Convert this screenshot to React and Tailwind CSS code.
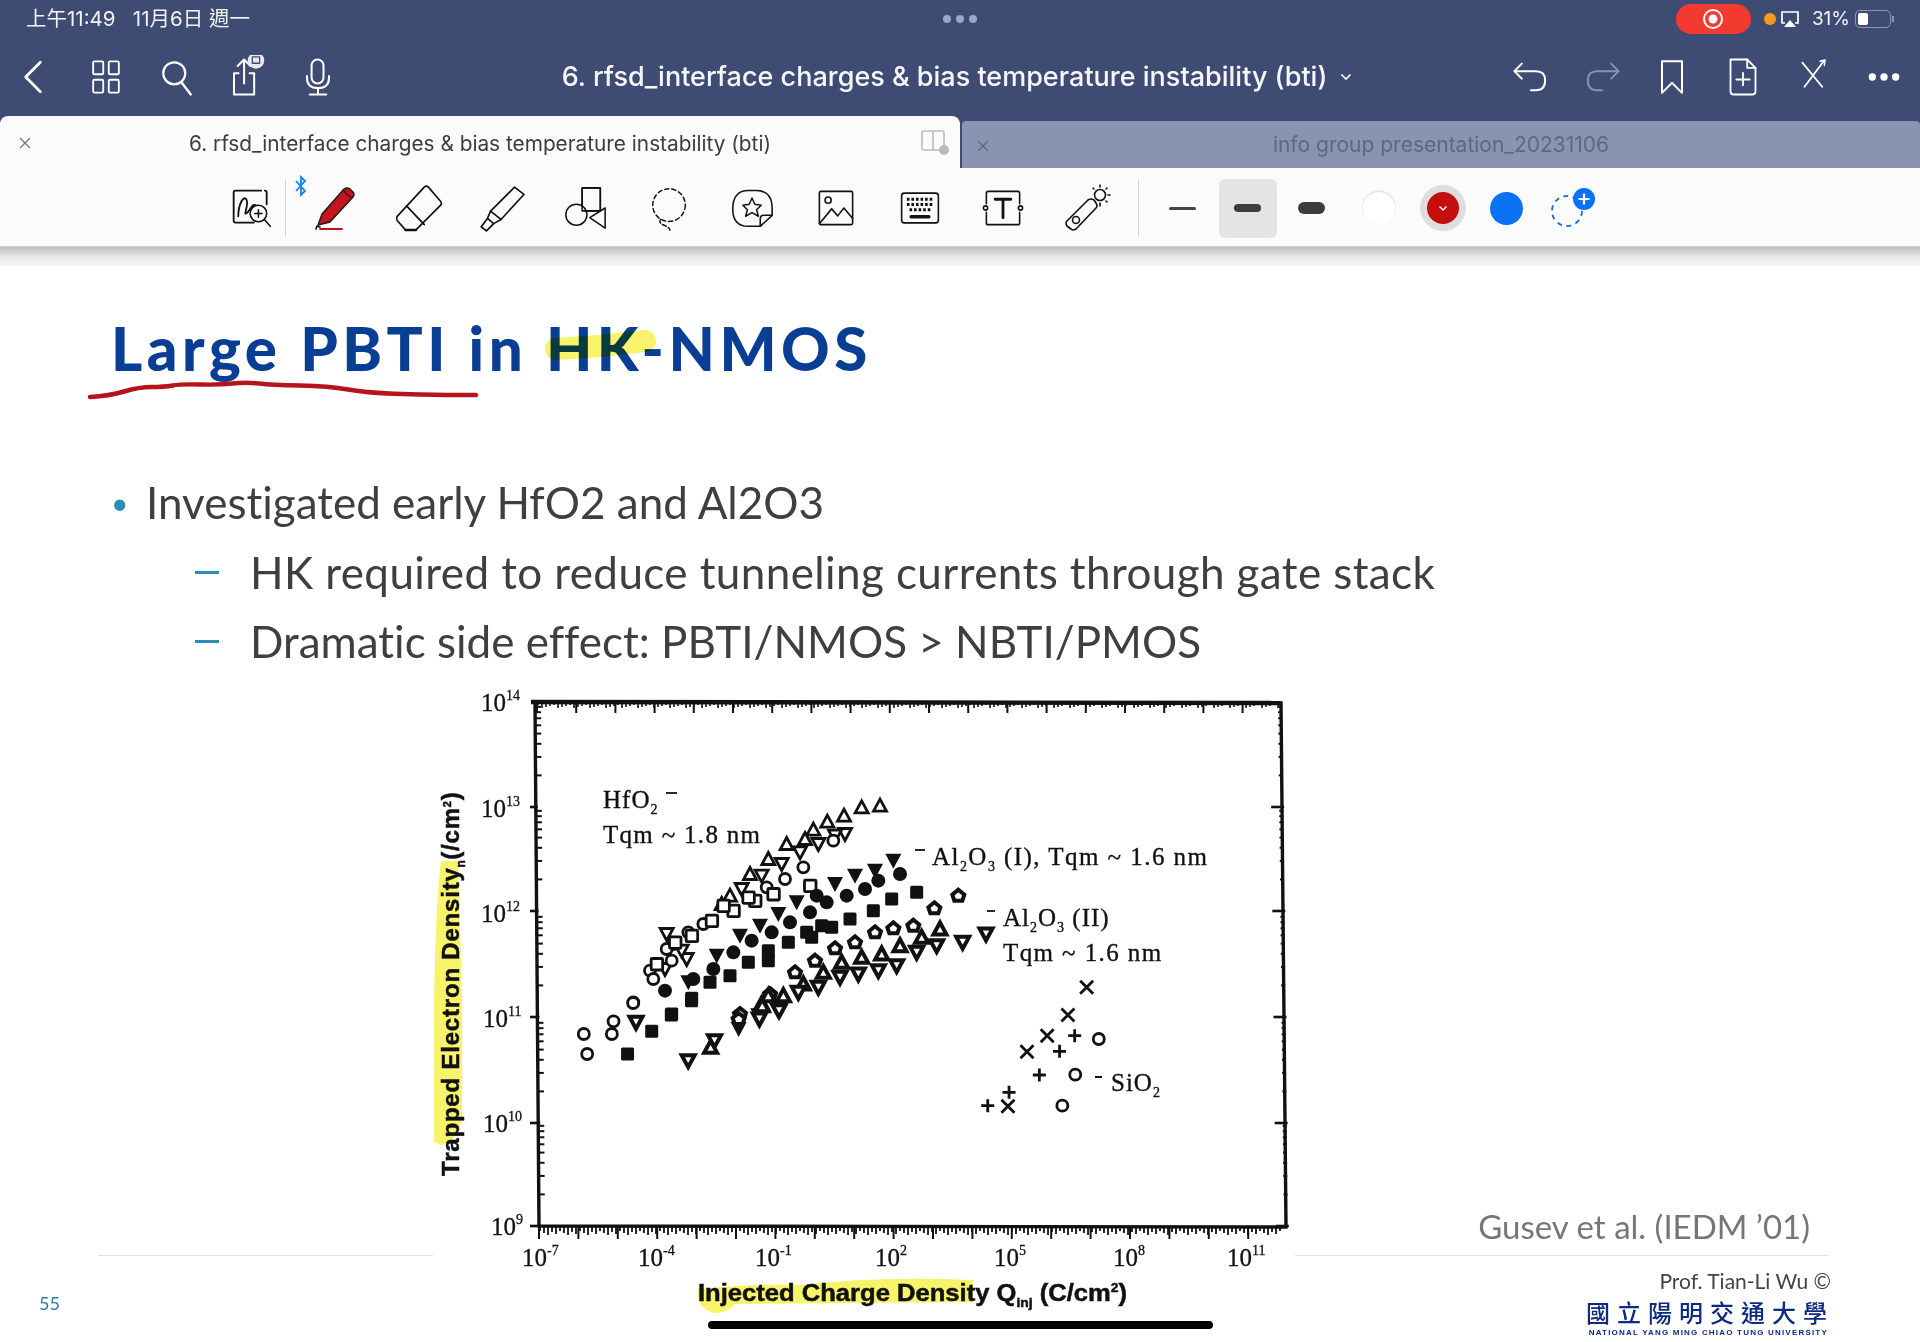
import React from "react";

const Ico = ({ w = 44, h = 44, vb = "0 0 48 48", c = "#111", sw = 2, children, className = "" }) => (
  <svg width={w} height={h} viewBox={vb} fill="none" stroke={c} strokeWidth={sw} strokeLinecap="round" strokeLinejoin="round" className={className}>
    {children}
  </svg>
);

const z3 = ([x, y]) => [420 + x / 3, 680 + y / 3];
const z4 = ([x, y]) => [800 + x / 3, 680 + y / 3];
const z5 = ([x, y]) => [420 + x * 0.561, 1000 + y / 3];

const S3 = {
  ut: [[1380,380],[1325,385],[1272,410],[1222,428],[1180,452],[1155,480],[1100,495],[1045,540],[990,585],[930,650],[905,675]],
  dt: [[1275,465],[1245,470],[1195,495],[1140,520],[1085,555],[1025,590],[965,630],[740,765],[800,840],[735,870],[785,815]],
  o: [[1240,485],[1150,565],[1095,600],[1040,625],[850,735],[805,760],[760,795],[740,810],[755,845],[690,875],[700,900],[640,970]],
  s: [[1170,620],[1060,645],[1005,665],[985,655],[940,695],[910,680],[875,725],[815,770],[765,790],[710,855]],
  DT: [[1420,545],[1365,575],[1305,590],[1245,615],[1130,670],[1075,705],[1020,740],[960,770],[890,830],[805,910]],
  C: [[1440,585],[1375,605],[1335,630],[1280,650],[1220,670],[1190,650],[1170,700],[1110,730],[1055,760],[995,785],[940,820],[880,870],[820,900],[735,935]],
  S: [[1490,640],[1415,660],[1360,695],[1290,720],[1235,745],[1205,740],[1160,760],[1175,775],[1105,790],[1045,815],[1045,845],[985,850],[930,890],[870,910],[815,958],[755,1005]],
  p: [[1480,740],[1420,748],[1365,760],[1305,790],[1245,808],[1185,845],[1125,880],[1050,945],[960,1005]],
  UT: [[1440,800],[1385,825],[1325,835],[1265,850],[1210,880],[1150,915],[1090,950],[1045,950],[1025,975]],
  bd: [[1490,820],[1430,860],[1375,875],[1315,885],[1260,895],[1195,925],[1135,940],[1075,990],[1020,1010]],
};
const S4 = {
  p: [[475,650],[403,688]],
  UT: [[420,750],[365,775]],
  bd: [[558,765],[488,790],[410,800]],
  x: [[860,925]],
};
const S5 = {
  o: [[292,105],[342,105],[345,67],[298,165],[380,12],[1210,120],[1168,227],[1145,320]],
  S: [[413,97],[448,48],[370,165],[484,5]],
  bd: [[385,70],[478,185],[605,60],[640,35],[525,125]],
  UT: [[518,145],[610,20]],
  p: [[568,60]],
  DT: [[568,90]],
  x: [[1155,48],[1118,110],[1082,158],[1048,322]],
  "+": [[1167,110],[1140,157],[1104,228],[1050,280],[1012,320]],
};

const Mark = ({ t, x, y }) => {
  const k = "#111";
  if (t === "o") return <circle cx={x} cy={y} r="5.5" fill="#fff" stroke={k} strokeWidth="2.8" />;
  if (t === "s") return <rect x={x - 5.5} y={y - 5.5} width="11.5" height="11.5" rx="1" fill="#fff" stroke={k} strokeWidth="2.8" />;
  if (t === "S") return <rect x={x - 6.5} y={y - 6.5} width="13" height="13" rx="1.5" fill={k} />;
  if (t === "C") return <circle cx={x} cy={y} r="7" fill={k} />;
  if (t === "ut") return <polygon points={`${x},${y - 6.5} ${x + 6.5},${y + 5.5} ${x - 6.5},${y + 5.5}`} fill="#fff" stroke={k} strokeWidth="2.8" />;
  if (t === "UT") return <polygon points={`${x},${y - 6.5} ${x + 6.5},${y + 5.5} ${x - 6.5},${y + 5.5}`} fill="#fff" stroke={k} strokeWidth="4" />;
  if (t === "dt") return <polygon points={`${x},${y + 6.5} ${x + 6.5},${y - 5.5} ${x - 6.5},${y - 5.5}`} fill="#fff" stroke={k} strokeWidth="2.8" />;
  if (t === "bd") return <polygon points={`${x},${y + 6.5} ${x + 6.5},${y - 5.5} ${x - 6.5},${y - 5.5}`} fill="#fff" stroke={k} strokeWidth="4" />;
  if (t === "DT") return <polygon points={`${x},${y + 8} ${x + 8},${y - 7} ${x - 8},${y - 7}`} fill={k} />;
  if (t === "p") return <polygon points={`${x},${y - 6} ${x + 6},${y - 1} ${x + 4},${y + 5} ${x - 4},${y + 5} ${x - 6},${y - 1}`} fill="#fff" stroke={k} strokeWidth="4" />;
  if (t === "x") return <path d={`M${x - 6.5} ${y - 6.5}L${x + 6.5} ${y + 6.5}M${x + 6.5} ${y - 6.5}L${x - 6.5} ${y + 6.5}`} stroke={k} strokeWidth="2.8" />;
  return <path d={`M${x - 6.5} ${y}L${x + 6.5} ${y}M${x} ${y - 6.5}L${x} ${y + 6.5}`} stroke={k} strokeWidth="2.8" />;
};

const marks = (set, fn) =>
  Object.entries(set).flatMap(([t, pts]) =>
    pts.map((p, i) => {
      const [x, y] = fn(p);
      return <Mark key={fn === z3 ? `a${t}${i}` : fn === z4 ? `b${t}${i}` : `c${t}${i}`} t={t} x={x} y={y} />;
    })
  );

const Exp = ({ x, y, e }) => (
  <text x={x - 2} y={y} fontSize="25" fill="#111" stroke="#111" strokeWidth="0.3" fontFamily="'Liberation Serif',serif">
    10
    <tspan fontSize="14" dy="-11">{e}</tspan>
  </text>
);

function Chart() {
  const yMaj = [703, 808, 912, 1018, 1124, 1227];
  const logs = [0.301, 0.477, 0.602, 0.699, 0.778, 0.845, 0.903, 0.954];
  const ticksL = [];
  const ticksR = [];
  yMaj.slice(1).forEach((yy, i) => {
    ticksL.push(<path key={`lm${i}`} d={`M${530} ${yy}L${537 + (yy - 703) / 131} ${yy}`} stroke="#111" strokeWidth="2.6" />);
    ticksR.push(<path key={`rm${i}`} d={`M${1270 + (yy - 703) / 90} ${yy}L${1283 + (yy - 703) / 90} ${yy}`} stroke="#111" strokeWidth="2.6" />);
    logs.forEach((l, j) => {
      const ty = yy - l * 105;
      const xl = 537 + (ty - 703) / 131;
      const xr = 1282 + (ty - 703) / 90;
      ticksL.push(<path key={`l${i}${j}`} d={`M${xl - 1} ${ty}L${xl + 4} ${ty}`} stroke="#111" strokeWidth="2" />);
      ticksR.push(<path key={`r${i}${j}`} d={`M${xr - 4} ${ty}L${xr} ${ty}`} stroke="#111" strokeWidth="2" />);
    });
  });
  const top = [];
  const bottom = [];
  for (let i = 0; i < 20; i++) {
    const x0 = 537 + i * 39.2;
    const x1 = 539 + i * 39.4;
    if (x0 < 1280) top.push(<path key={`t${i}`} d={`M${x0} 704L${x0} 714`} stroke="#111" strokeWidth="2" />);
    if (x1 < 1285) bottom.push(<path key={`b${i}`} d={`M${x1} 1227L${x1} 1240`} stroke="#111" strokeWidth="2" />);
  }
  for (let i = 0; i < 186; i++) {
    const x = 540 + i * 4;
    bottom.push(<path key={`f${i}`} d={`M${x} 1228L${x} ${1232 + ((i * 7) % 5)}`} stroke="#111" strokeWidth="1.8" />);
    top.push(<path key={`g${i}`} d={`M${x - 2} 704L${x - 2} ${706 + ((i * 3) % 4)}`} stroke="#111" strokeWidth="1.6" />);
  }
  return (
    <svg width="862" height="662" viewBox="433 680 862 662" className="block shrink-0">
      <rect x="433" y="680" width="862" height="662" fill="#fff" />
      <path d="M434 1143L434 1000Q436 900 441 862L458 862L462 1000L462 1120Q456 1144 440 1146Z" fill="#f7f36a" />
      <path d="M698 1290Q760 1284 800 1286Q880 1277 973 1281L973 1303L735 1305Q728 1314 714 1314Q700 1310 698 1298Z" fill="#f7f36a" />
      <path d="M535 703L1281 704L1286 1228L539 1227Z" fill="none" stroke="#111" strokeWidth="3.4" />
      <path d="M531 703L1281 704" stroke="#111" strokeWidth="4.4" />
      {ticksL}
      {ticksR}
      {top}
      {bottom}
      {marks(S3, z3)}
      {marks(S4, z4)}
      {marks(S5, z5)}
      <Exp x={483} y={712} e="14" />
      <Exp x={483} y={818} e="13" />
      <Exp x={483} y={923} e="12" />
      <Exp x={485} y={1028} e="11" />
      <Exp x={485} y={1133} e="10" />
      <Exp x={493} y={1236} e="9" />
      <Exp x={524} y={1267} e="-7" />
      <Exp x={640} y={1267} e="-4" />
      <Exp x={757} y={1267} e="-1" />
      <Exp x={877} y={1267} e="2" />
      <Exp x={996} y={1267} e="5" />
      <Exp x={1115} y={1267} e="8" />
      <Exp x={1229} y={1267} e="11" />
      <g fontFamily="'Liberation Serif',serif" fontSize="25" fill="#111" stroke="#111" strokeWidth="0.35" letterSpacing="1">
        <text x="603" y="809">HfO<tspan fontSize="14" dy="6">2</tspan></text>
        <path d="M666 794L677 794" stroke="#111" strokeWidth="1.8" />
        <text x="603" y="844" letterSpacing="1.3">Tqm ~ 1.8 nm</text>
        <path d="M915 851L925 851" stroke="#111" strokeWidth="1.8" />
        <text x="932" y="866" letterSpacing="1.45">Al<tspan fontSize="14" dy="6">2</tspan><tspan dy="-6">O</tspan><tspan fontSize="14" dy="6">3</tspan><tspan dy="-6"> (I), Tqm ~ 1.6 nm</tspan></text>
        <path d="M987 912L995 912" stroke="#111" strokeWidth="1.8" />
        <text x="1003" y="927">Al<tspan fontSize="14" dy="6">2</tspan><tspan dy="-6">O</tspan><tspan fontSize="14" dy="6">3</tspan><tspan dy="-6"> (II)</tspan></text>
        <text x="1003" y="962" letterSpacing="1.4">Tqm ~ 1.6 nm</text>
        <path d="M1095 1078L1102 1078" stroke="#111" strokeWidth="2" />
        <text x="1111" y="1092">SiO<tspan fontSize="14" dy="6">2</tspan></text>
      </g>
      <text x="698" y="1302" fontFamily="'Liberation Sans',sans-serif" fontWeight="700" fontSize="24" fill="#111" stroke="#111" strokeWidth="0.5" textLength="429" lengthAdjust="spacingAndGlyphs">
        Injected Charge Density Q<tspan fontSize="13" dy="6">inj</tspan><tspan dy="-6"> (C/cm</tspan><tspan fontSize="13" dy="-9">2</tspan><tspan dy="9">)</tspan>
      </text>
      <text transform="translate(459 1177) rotate(-90)" fontFamily="'Liberation Sans',sans-serif" fontWeight="700" fontSize="24" fill="#111" stroke="#111" strokeWidth="0.5" letterSpacing="0.8">
        Trapped Electron Density<tspan fontSize="12" dy="6">n</tspan><tspan dy="-6" dx="-8"> (/cm</tspan><tspan fontSize="11" dy="-8">2</tspan><tspan dy="8">)</tspan>
      </text>
    </svg>
  );
}

const Pen = () => (
  <Ico w={48} h={48}>
    <path d="M8 41L12 30L34 5Q37 3 40 5L43 8Q45 10 43 13L20 38Z" fill="#c3151b" stroke="#1a1a1a" strokeWidth="1.4" />
    <path d="M33 6L41 14" stroke="#6b1013" strokeWidth="2" />
    <path d="M6 45L7 42L10 43" stroke="#111" strokeWidth="1.6" />
    <path d="M10 45L32 45" stroke="#b3161b" strokeWidth="1.8" />
  </Ico>
);

const PageIcon = ({ children }) => <div className="w-[83.7px] h-full flex items-center justify-center shrink-0">{children}</div>;

const smooth = (pts) => {
  let d = `M${pts[0][0]} ${pts[0][1]}`;
  for (let i = 1; i < pts.length - 1; i++) {
    const mx = (pts[i][0] + pts[i + 1][0]) / 2;
    const my = (pts[i][1] + pts[i + 1][1]) / 2;
    d += `Q${pts[i][0]} ${pts[i][1]} ${mx} ${my}`;
  }
  const l = pts[pts.length - 1];
  return d + `L${l[0]} ${l[1]}`;
};
const ink = [[90,397],[109,396],[139,387],[164,387],[181,384],[219,385],[246,382],[271,385],[329,386],[367,393],[438,395],[476,395]];

export default function App() {
  return (
    <div className="w-[1920px] h-[1342px] relative overflow-hidden bg-white flex flex-col font-['Inter','Noto_Sans_CJK_TC',sans-serif]">
      {/* top bar */}
      <div className="bg-[#3e4c74] h-[116px] shrink-0 flex flex-col text-white">
        <div className="h-[38px] flex items-center pl-[26px] pr-[26px]">
          <div className="text-[20.5px] w-[900px] whitespace-pre text-[#f2f2f2]" style={{ fontFamily: "Inter,'Noto Sans CJK TC',sans-serif" }}>上午11:49   11月6日 週一</div>
          <div className="flex gap-[5px] w-[60px] ml-[17px]">
            <span className="w-[8px] h-[8px] rounded-full bg-[#9aa6cc]" />
            <span className="w-[8px] h-[8px] rounded-full bg-[#9aa6cc]" />
            <span className="w-[8px] h-[8px] rounded-full bg-[#9aa6cc]" />
          </div>
          <div className="flex-1" />
          <div className="w-[75px] h-[30px] rounded-[15px] bg-[#f23a30] flex items-center justify-center">
            <svg width="22" height="22" viewBox="0 0 22 22"><circle cx="11" cy="11" r="9" fill="none" stroke="#fff" strokeWidth="2" /><circle cx="11" cy="11" r="4.5" fill="#fff" /></svg>
          </div>
          <span className="w-[12px] h-[12px] rounded-full bg-[#f79a1e] ml-[13px]" />
          <svg width="20" height="20" viewBox="0 0 20 20" className="ml-[4px]"><path d="M5 14H2V3H18V14H15" fill="none" stroke="#fff" strokeWidth="1.7" /><path d="M10 11L16 18H4Z" fill="#fff" /></svg>
          <span className="text-[19px] ml-[12px] text-[#f2f2f2]">31%</span>
          <div className="ml-[5px] w-[36px] h-[18px] rounded-[5px] border border-[#8d97b5] p-[2px] flex">
            <div className="w-[10px] h-full rounded-[2px] bg-white" />
          </div>
          <div className="w-[2px] h-[6px] bg-[#8d97b5] ml-[1px]" />
        </div>
        <div className="flex-1 flex items-center">
          <div className="w-[418px] shrink-0 flex">
            {[
              ["w-[66px]", <><path d="M32 8L16 24L32 40" strokeWidth="3" /></>],
              ["w-[80px]", <><rect x="10" y="7" width="11" height="14" rx="1.5" /><rect x="27" y="7" width="11" height="14" rx="1.5" /><rect x="10" y="27" width="11" height="14" rx="1.5" /><rect x="27" y="27" width="11" height="14" rx="1.5" /></>],
              ["w-[62px]", <><circle cx="21" cy="20" r="12" strokeWidth="2.4" /><path d="M29 30L39 43" strokeWidth="2.6" /></>],
              ["w-[74px]", <><path d="M17 20H12V43H34V20H29" strokeWidth="2.2" /><path d="M23 31V5M16 12L23 5L30 12" strokeWidth="2.2" /><circle cx="36" cy="6" r="8" fill="#e8e8ee" stroke="#e8e8ee" /><rect x="32" y="2" width="8" height="7" stroke="#3e4c74" strokeWidth="1.4" /></>],
              ["w-[72px]", <><rect x="17" y="5" width="13" height="26" rx="6.5" strokeWidth="2.2" /><path d="M12 23V25Q12 36 24 36Q36 36 36 25V23M24 36V43M15 43H33" strokeWidth="2.2" /></>],
            ].map(([wc, ic], i) => (
              <div key={i} className={`${wc} flex justify-center`}>
                <Ico c="#fff" w={44} h={44}>{ic}</Ico>
              </div>
            ))}
          </div>
          <div className="flex-1 flex items-center justify-center gap-[13px] text-[27px] font-medium text-[#f6f6f8] whitespace-nowrap">
            <span>6. rfsd_interface charges &amp; bias temperature instability (bti)</span>
            <svg width="12" height="8" viewBox="0 0 12 8"><path d="M1.5 1.5L6 6L10.5 1.5" fill="none" stroke="#fff" strokeWidth="1.7" /></svg>
          </div>
          <div className="w-[424px] shrink-0 flex justify-end pr-[1px]">
            {[
              ["#fff", <><path d="M13 8L4 17L13 26" strokeWidth="2.4" /><path d="M5 17H30Q41 17 41 28Q41 40 30 40H24" strokeWidth="2.4" /></>],
              ["#8592b5", <><path d="M35 8L44 17L35 26" strokeWidth="2.4" /><path d="M43 17H18Q7 17 7 28Q7 40 18 40H24" strokeWidth="2.4" /></>],
              ["#fff", <path d="M12 5H36V43L24 31L12 43Z" strokeWidth="2.4" />],
              ["#fff", <><path d="M9 3H29L39 13V41Q39 45 35 45H13Q9 45 9 41Z" strokeWidth="2.2" /><path d="M29 3V13H39M24 19V34M16 27H32" strokeWidth="2.2" /></>],
              ["#fff", <><path d="M9 8L37 42M39 6L12 42" strokeWidth="2.6" /><path d="M34 6L41 4L40 12" strokeWidth="2" /></>],
              ["#fff", <><circle cx="10" cy="24" r="3.4" fill="#fff" /><circle cx="24" cy="24" r="3.4" fill="#fff" /><circle cx="38" cy="24" r="3.4" fill="#fff" /></>],
            ].map(([c, ic], i) => (
              <div key={i} className="w-[70.6px] flex justify-center">
                <Ico c={c} w={i === 4 ? 34 : 40} h={i === 4 ? 34 : 40}>{ic}</Ico>
              </div>
            ))}
          </div>
        </div>
      </div>

      {/* tabs */}
      <div className="bg-[#3e4c74] h-[52px] shrink-0 flex">
        <div className="w-[960px] h-full bg-[#fbfbfb] rounded-t-[8px] flex items-center text-[#3d3d3d]">
          <div className="w-[50px] text-center text-[19px] text-[#777]">
            <svg width="12" height="12" viewBox="0 0 12 12" className="inline-block"><path d="M1 1L11 11M11 1L1 11" stroke="#777" strokeWidth="1.3" /></svg>
          </div>
          <div className="flex-1 text-center text-[20.8px] pt-[4px]">6. rfsd_interface charges &amp; bias temperature instability (bti)</div>
          <div className="w-[50px] flex justify-center">
            <svg width="30" height="30" viewBox="0 0 30 30" fill="none"><rect x="2" y="4" width="22" height="19" rx="2" stroke="#b8bcc4" strokeWidth="1.6" /><path d="M13 4V23" stroke="#b8bcc4" strokeWidth="1.6" /><circle cx="24" cy="23" r="5" fill="#b8bcc4" /></svg>
          </div>
        </div>
        <div className="flex-1 mt-[5px] ml-[2px] bg-[#8a94b2] rounded-t-[4px] flex items-center text-[#5e6784]">
          <div className="w-[42px] text-center">
            <svg width="12" height="12" viewBox="0 0 12 12" className="inline-block"><path d="M1 1L11 11M11 1L1 11" stroke="#5e6784" strokeWidth="1.3" /></svg>
          </div>
          <div className="flex-1 text-center text-[21px] pr-[42px]">info group presentation_20231106</div>
        </div>
      </div>

      {/* toolbar */}
      <div className="h-[79px] shrink-0 bg-[#fbfbfb] border-b border-[#cfcfcf] flex items-center pt-[2px]">
        <div className="ml-[230px] w-[44px] flex justify-center">
          <Ico w={46} h={46}>
            <path d="M34 5H6Q4 5 4 7V38Q4 40 6 40H26M40 20V7Q40 5 38 5" strokeWidth="2" />
            <path d="M9 33C9 20 15 9 18 15C21 22 13 34 19 29C23 25 24 19 28 21" strokeWidth="2" />
            <circle cx="31" cy="30" r="9" strokeWidth="1.7" />
            <path d="M37.5 36.5L44 44M31 26V34M27 30H35" strokeWidth="1.7" />
          </Ico>
        </div>
        <div className="ml-[11px] w-px h-[58px] bg-[#d8d8d8]" />
        <div className="ml-[6px] flex h-full items-center">
          <PageIcon>
            <div className="relative">
              <Pen />
              <svg width="14" height="22" viewBox="0 0 14 22" fill="none" className="absolute -left-[16px] -top-[9px]"><path d="M2 6L11 16L7 20V2L11 6L2 16" stroke="#1683ea" strokeWidth="1.8" /></svg>
            </div>
          </PageIcon>
          <PageIcon>
            <Ico w={50} h={50}>
              <path d="M34 4L46 18Q47 20 46 21L22 45H12L4 36Q3 34 4 32L30 4Q32 2 34 4Z" strokeWidth="1.6" />
              <path d="M13 22L30 40" strokeWidth="1.6" />
              <path d="M12 45H22" strokeWidth="2.4" />
            </Ico>
          </PageIcon>
          <PageIcon>
            <Ico w={50} h={50}>
              <path d="M37 4L46 11L24 35L14 27Z" strokeWidth="1.6" />
              <path d="M14 27L11 34L17 39L24 35M11 34L5 42L10 46L17 39" strokeWidth="1.6" />
            </Ico>
          </PageIcon>
          <PageIcon>
            <Ico w={46} h={46}>
              <rect x="21" y="3" width="19" height="24" rx="1" strokeWidth="1.6" />
              <circle cx="15" cy="31" r="11" fill="#fbfbfb" strokeWidth="1.6" />
              <path d="M45 24V45L29 34Z" fill="#fbfbfb" strokeWidth="1.6" />
              <path d="M21 3H40V27H21Z" strokeWidth="1.6" />
            </Ico>
          </PageIcon>
          <PageIcon>
            <Ico w={46} h={50} sw={1.5}>
              <circle cx="24" cy="21" r="17" strokeDasharray="4.5 3" />
              <path d="M15 36Q13 40 19 42Q24 44 25 47" strokeDasharray="4 2.5" />
            </Ico>
          </PageIcon>
          <PageIcon>
            <Ico w={48} h={44} sw={1.7}>
              <path d="M33 44H20Q3 44 3 25Q3 5 20 5H29Q46 5 46 25V32L33 44Z" />
              <path d="M33 44V36Q33 32 37 32H46" />
              <path d="M24 13L27 20L34 21L29 26L31 33L24 29L17 33L19 26L14 21L21 20Z" strokeWidth="1.6" />
            </Ico>
          </PageIcon>
          <PageIcon>
            <Ico w={42} h={42} sw={1.8}>
              <rect x="5" y="5" width="38" height="38" rx="1.5" />
              <circle cx="15" cy="15" r="3.5" />
              <path d="M5 42L19 25L26 33L33 24L43 36" />
            </Ico>
          </PageIcon>
          <PageIcon>
            <Ico w={42} h={42} sw={1.8}>
              <rect x="3" y="7" width="42" height="34" rx="3" />
              <path d="M9 14H39M9 20H39M12 26H36" stroke="#111" strokeWidth="3.4" strokeDasharray="3 2.2" strokeLinecap="butt" />
              <path d="M14 34H34" strokeWidth="4" />
            </Ico>
          </PageIcon>
          <PageIcon>
            <Ico w={42} h={42} sw={1.8}>
              <path d="M5 19V7Q5 5 7 5H41Q43 5 43 7V19M5 29V41Q5 43 7 43H41Q43 43 43 41V29" />
              <circle cx="4" cy="24" r="2.4" />
              <circle cx="44" cy="24" r="2.4" />
              <path d="M15 14H33M24 14V35" strokeWidth="3.2" />
            </Ico>
          </PageIcon>
          <PageIcon>
            <Ico w={48} h={48} sw={1.6}>
              <path d="M4 37L25 16Q28 14 31 16L33 19Q35 22 33 24L13 45Q10 47 8 45L4 42Q2 39 4 37Z" />
              <circle cx="13" cy="36" r="3.5" />
              <circle cx="37" cy="11" r="5.5" />
              <path d="M37 1V3M47 11H45M44 4L43 5M44 18L43 17M30 4L31 5M37 19V22" />
            </Ico>
          </PageIcon>
        </div>
        <div className="ml-[9px] w-px h-[58px] bg-[#d8d8d8]" />
        <div className="ml-[14px] w-[60px] flex justify-center"><span className="block w-[27px] h-[3px] rounded-full bg-[#444]" /></div>
        <div className="ml-[6px] w-[58px] h-[59px] rounded-[6px] bg-[#e4e4e6] flex items-center justify-center"><span className="block w-[27px] h-[8px] rounded-full bg-[#3c3c3e]" /></div>
        <div className="w-[70px] flex justify-center"><span className="block w-[27px] h-[12px] rounded-[6px] bg-[#3c3c3e]" /></div>
        <div className="w-[64px] flex justify-center"><span className="block w-[32px] h-[32px] rounded-full bg-white shadow-[0_-1px_2px_rgba(0,0,0,0.15)]" /></div>
        <div className="w-[64px] flex justify-center">
          <span className="w-[46px] h-[46px] rounded-full bg-[#dedede] flex items-center justify-center">
            <span className="w-[32px] h-[32px] rounded-full bg-[#c40d0d] flex items-center justify-center">
              <svg width="10" height="7" viewBox="0 0 10 7"><path d="M1.5 1.5L5 5L8.5 1.5" fill="none" stroke="#fff" strokeWidth="1.4" /></svg>
            </span>
          </span>
        </div>
        <div className="w-[64px] flex justify-center"><span className="block w-[33px] h-[33px] rounded-full bg-[#0a72f5]" /></div>
        <svg width="60" height="50" viewBox="0 0 60 50" className="ml-[2px]">
          <circle cx="26" cy="28" r="15" fill="none" stroke="#1c6fd1" strokeWidth="1.8" strokeDasharray="5 4.5" />
          <circle cx="43" cy="16" r="11" fill="#0a72f5" />
          <path d="M43 10.5V21.5M37.5 16H48.5" stroke="#fff" strokeWidth="2.2" />
        </svg>
      </div>
      <div className="h-[19px] shrink-0 bg-gradient-to-b from-[#bdbdbd] via-[#e7e7e7] to-[#f6f6f6]" />

      {/* slide */}
      <div className="relative flex-1 min-h-0 flex flex-col" style={{ fontFamily: "Lato,sans-serif" }}>
        <h1 className="pl-[111px] pt-[47px] h-[118px] shrink-0 text-[60px] leading-[70px] font-black tracking-[4.5px] text-[#0a3e94] whitespace-nowrap">Large PBTI in HK-NMOS</h1>
        <div className="pl-[111px] mt-[83px] mb-[4px] shrink-0 flex flex-col text-[#3f3f3f] text-[44px] whitespace-nowrap [font-variant-ligatures:none]">
          <div className="flex items-center h-[70px]">
            <span className="w-[35px] text-[#2a8cb8] text-[30px]">•</span>
            <span>Investigated early HfO2 and Al2O3</span>
          </div>
          <div className="flex items-center h-[70px] pl-[84px]">
            <span className="w-[55px] text-[#2a8cb8]"><span className="block w-[24px] h-[3px] bg-[#2a8cb8]" /></span>
            <span className="tracking-[0.4px]">HK required to reduce tunneling currents through gate stack</span>
          </div>
          <div className="flex items-center h-[68px] pl-[84px]">
            <span className="w-[55px]"><span className="block w-[24px] h-[3px] bg-[#2a8cb8]" /></span>
            <span>Dramatic side effect: PBTI/NMOS &gt; NBTI/PMOS</span>
          </div>
        </div>
        <div className="flex-1 min-h-0 flex">
          <div className="w-[433px] shrink-0 pl-[98px] pt-[576px]">
            <div className="h-px bg-[#e0dfe3]" />
            <div className="text-[18px] text-[#2a7aa8] -ml-[59px] mt-[34px]">55</div>
          </div>
          <Chart />
          <div className="w-[533px] shrink-0 flex flex-col items-end pt-[523px]">
            <div className="text-[33px] leading-[48px] text-[#767676] pr-[18px] mb-[5px] whitespace-nowrap">Gusev et al. (IEDM ’01)</div>
            <div className="h-px w-full bg-[#e0dfe3]" />
            <div className="text-[21px] leading-[26px] mt-[12px] -mr-[3px] text-[#444] whitespace-nowrap">Prof. Tian-Li Wu ©</div>
            <div className="text-[24px] leading-[30px] font-medium text-[#0c2a82] tracking-[7px] -mr-[6px] mt-[3px] whitespace-nowrap" style={{ fontFamily: "'Noto Sans CJK TC',sans-serif" }}>國立陽明交通大學</div>
            <div className="text-[8px] leading-[12px] font-bold text-[#0c2a82] tracking-[1.2px] whitespace-nowrap" style={{ fontFamily: "'Liberation Sans',sans-serif" }}>NATIONAL YANG MING CHIAO TUNG UNIVERSITY</div>
          </div>
        </div>
      </div>

      {/* ink overlays */}
      <svg width="1920" height="500" viewBox="0 0 1920 500" className="absolute left-0 top-0 pointer-events-none mix-blend-multiply">
        <path d="M556 349L600 346L645 341" fill="none" stroke="#f7f36a" strokeWidth="22" strokeLinecap="round" />
      </svg>
      <svg width="1920" height="500" viewBox="0 0 1920 500" className="absolute left-0 top-0 pointer-events-none">
        <path d={smooth(ink)} fill="none" stroke="#b5141c" strokeWidth="4.5" strokeLinecap="round" strokeLinejoin="round" />
      </svg>
      <div className="absolute left-[708px] top-[1321px] w-[505px] h-[8px] rounded-full bg-black" />
    </div>
  );
}
